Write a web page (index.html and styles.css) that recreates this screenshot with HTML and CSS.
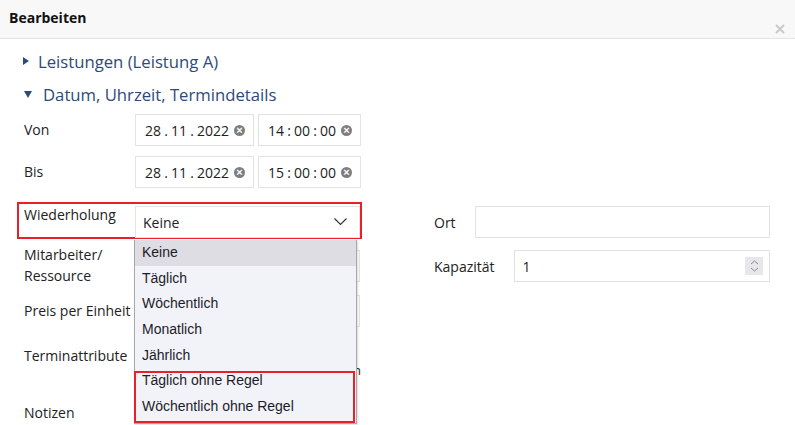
FILE: index.html
```html
<!DOCTYPE html>
<html lang="de">
<head>
    <meta charset="UTF-8">
    <title>Bearbeiten</title>
    <link rel="stylesheet" href="styles.css">
</head>
<body>
    <div class="dialog">
        <div class="dialog-header">
            <span class="dialog-title">Bearbeiten</span>
            <span class="close-button">
                <svg width="10" height="10" viewBox="0 0 10 10"><path d="M1 1 L9 9 M9 1 L1 9" stroke="#c8c8c8" stroke-width="1.8"/></svg>
            </span>
        </div>

        <div class="dialog-body">
            <div class="toggle">
                <svg class="tri-right" width="6" height="8" viewBox="0 0 6 8"><path d="M0 0 L6 4 L0 8 Z" fill="#2e4a7a"/></svg>
                <span>Leistungen (Leistung A)</span>
            </div>
            <div class="toggle open">
                <svg class="tri-down" width="8" height="7" viewBox="0 0 8 7"><path d="M0 0 L8 0 L4 7 Z" fill="#2e4a7a"/></svg>
                <span>Datum, Uhrzeit, Termindetails</span>
            </div>

            <div class="row date-row">
                <label class="label">Von</label>
                <div class="field date-field">
                    <span class="value">28<i class="sep">.</i>11<i class="sep">.</i>2022</span>
                    <span class="clear">&times;</span>
                </div>
                <div class="field time-field">
                    <span class="value">14<i class="sep">:</i>00<i class="sep">:</i>00</span>
                    <span class="clear">&times;</span>
                </div>
            </div>
            <div class="row date-row">
                <label class="label">Bis</label>
                <div class="field date-field">
                    <span class="value">28<i class="sep">.</i>11<i class="sep">.</i>2022</span>
                    <span class="clear">&times;</span>
                </div>
                <div class="field time-field">
                    <span class="value">15<i class="sep">:</i>00<i class="sep">:</i>00</span>
                    <span class="clear">&times;</span>
                </div>
            </div>

            <div class="columns">
                <div class="col-left">
                    <div class="row repeat-row">
                        <span class="mark mark-repeat"></span>
                        <label class="label">Wiederholung</label>
                        <div class="select-wrap">
                            <div class="field select">
                                <span>Keine</span>
                                <svg width="13" height="8" viewBox="0 0 13 8"><path d="M0.5 0.5 L6.5 6.5 L12.5 0.5" fill="none" stroke="#333" stroke-width="1.2"/></svg>
                            </div>
                            <ul class="options">
                                <li class="active">Keine</li>
                                <li>Täglich</li>
                                <li>Wöchentlich</li>
                                <li>Monatlich</li>
                                <li>Jährlich</li>
                                <li>Täglich ohne Regel</li>
                                <li>Wöchentlich ohne Regel</li>
                                <span class="mark mark-options"></span>
                            </ul>
                        </div>
                    </div>
                    <div class="row staff-row">
                        <label class="label">Mitarbeiter/<br>Ressource</label>
                        <div class="field wide"></div>
                    </div>
                    <div class="row price-row">
                        <label class="label">Preis per Einheit</label>
                        <div class="field wide"></div>
                    </div>
                    <div class="row attr-row">
                        <label class="label">Terminattribute</label>
                        <div class="attr-box">m</div>
                    </div>
                    <div class="row notes-row">
                        <label class="label">Notizen</label>
                    </div>
                </div>

                <div class="col-right">
                    <div class="row side-row">
                        <label class="side-label">Ort</label>
                        <div class="field grow"></div>
                    </div>
                    <div class="row side-row">
                        <label class="side-label">Kapazität</label>
                        <div class="field grow number">
                            <span>1</span>
                            <span class="spinner">
                                <svg width="9" height="12" viewBox="0 0 9 12"><path d="M1 4 L4.5 1 L8 4 M1 8 L4.5 11 L8 8" fill="none" stroke="#8a8a96" stroke-width="1"/></svg>
                            </span>
                        </div>
                    </div>
                </div>
            </div>
        </div>
    </div>
</body>
</html>
```

FILE: styles.css
```css
* {
    margin: 0;
    padding: 0;
    box-sizing: border-box;
}

body {
    font-family: "Open Sans", Arial, sans-serif;
    font-size: 14px;
    color: #222;
    background-color: #fff;
    width: 795px;
    height: 425px;
    overflow: hidden;
}

.dialog-header {
    position: relative;
    height: 39px;
    background-color: #f8f8f8;
    border-bottom: 1px solid #e2e2e2;
    padding: 7px 9px;
}

.dialog-title {
    font-weight: bold;
    font-size: 14px;
    color: #111;
    line-height: 22px;
}

.close-button {
    position: absolute;
    right: 10px;
    top: 24px;
    line-height: 0;
}

.dialog-body {
    padding: 11px 25px 0 24px;
}

.toggle {
    display: flex;
    align-items: center;
    height: 22px;
    font-size: 16.7px;
    color: #2e4a7a;
    margin-bottom: 11px;
}

.tri-right {
    margin-left: -1px;
    margin-right: 9px;
}

.tri-down {
    margin-right: 11px;
}

.toggle.open {
    margin-bottom: 9px;
}

.row {
    display: flex;
}

.label {
    width: 111px;
    flex-shrink: 0;
    line-height: 21px;
}

.field {
    height: 32px;
    border: 1px solid #e3e3e3;
    background-color: #fff;
    display: flex;
    align-items: center;
}

.date-row {
    height: 32px;
    align-items: center;
    margin-bottom: 10px;
}

.date-row .label {
    margin-top: -2px;
}

.date-field {
    width: 119px;
    padding: 0 8px 0 9px;
    justify-content: space-between;
}

.time-field {
    width: 103px;
    margin-left: 4px;
    padding: 0 8px 0 9px;
    justify-content: space-between;
}

.sep {
    font-style: normal;
    display: inline-block;
    width: 10px;
    text-align: center;
}

.clear {
    width: 11px;
    height: 11px;
    border-radius: 50%;
    background-color: #7e7e7e;
    color: #fff;
    font-size: 11px;
    font-weight: bold;
    line-height: 11px;
    text-align: center;
    font-family: Arial, sans-serif;
}

.columns {
    display: flex;
    padding-top: 8px;
}

.col-left {
    width: 336px;
}

.col-right {
    flex: 1;
    margin-left: 74px;
}

.repeat-row {
    position: relative;
    height: 31px;
}

.repeat-row .label {
    margin-top: -2px;
}

.mark {
    position: absolute;
    border: 2px solid #e8202a;
    pointer-events: none;
}

.mark-repeat {
    left: -7px;
    right: -2px;
    top: -4px;
    bottom: -2px;
}

.select-wrap {
    position: relative;
    flex: 1;
}

.select {
    height: 32px;
    padding: 0 12px 0 7px;
    justify-content: space-between;
}

.options {
    position: absolute;
    left: -1px;
    top: 34px;
    width: 223px;
    list-style: none;
    background-color: #f2f3f8;
    border: 1px solid #a8a8a8;
    border-top: none;
    box-shadow: 1px 1px 2px rgba(0, 0, 0, 0.15);
    padding-bottom: 3px;
    font-family: "Liberation Sans", Arial, sans-serif;
    font-size: 14px;
    color: #1c1c28;
    z-index: 10;
}

.options li {
    height: 25.67px;
    line-height: 25.67px;
    padding-left: 7px;
}

.options li.active {
    background-color: #dedde3;
}

.mark-options {
    left: -1px;
    right: 1px;
    top: 131px;
    bottom: 0;
}

.staff-row {
    margin-top: 7px;
    height: 45px;
}

.staff-row .field {
    margin-top: 6px;
}

.wide {
    flex: 1;
}

.price-row {
    margin-top: 6px;
    height: 50px;
}

.price-row .label {
    padding-top: 5px;
}

.attr-row {
    height: 57px;
}

.attr-box {
    flex: 1;
    text-align: right;
    padding-top: 19px;
    margin-right: -1px;
    font-size: 13px;
    line-height: 12px;
    color: #3a2a10;
    overflow: hidden;
}

.side-row {
    align-items: center;
    height: 32px;
    margin-bottom: 12px;
}

.side-label {
    margin-right: 19px;
    margin-top: 1px;
}

.grow {
    flex: 1;
}

.number {
    padding: 0 6px 0 8px;
    justify-content: space-between;
}

.spinner {
    width: 18px;
    height: 18px;
    background-color: #e6e6eb;
    display: flex;
    align-items: center;
    justify-content: center;
}
```
